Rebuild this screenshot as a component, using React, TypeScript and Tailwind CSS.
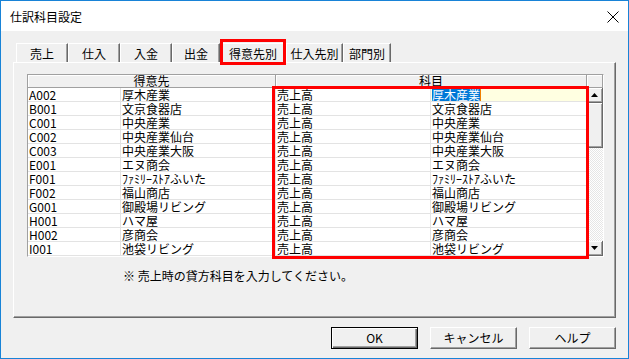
import React from "react";

const rows: [string, string][] = [
  ["A002", "厚木産業"],
  ["B001", "文京食器店"],
  ["C001", "中央産業"],
  ["C002", "中央産業仙台"],
  ["C003", "中央産業大阪"],
  ["E001", "エヌ商会"],
  ["F001", "ﾌｧﾐﾘｰｽﾄｱふいた"],
  ["F002", "福山商店"],
  ["G001", "御殿場リビング"],
  ["H001", "ハマ屋"],
  ["H002", "彦商会"],
  ["I001", "池袋リビング"],
];

const tabs: { label: string; w: string }[] = [
  { label: "売上", w: "w-[52px]" },
  { label: "仕入", w: "w-[52px]" },
  { label: "入金", w: "w-[52px]" },
  { label: "出金", w: "w-[48px]" },
  { label: "得意先別", w: "w-[66px]" },
  { label: "仕入先別", w: "w-[57px]" },
  { label: "部門別", w: "w-[48px]" },
];

function Tri({ up }: { up: boolean }) {
  return (
    <svg width="7" height="4" viewBox="0 0 7 4">
      {up ? <polygon points="0,4 7,4 3.5,0" fill="#000" /> : <polygon points="0,0 7,0 3.5,4" fill="#000" />}
    </svg>
  );
}

export default function App() {
  return (
    <div className="w-[629px] h-[359px] border border-[#1883d7] bg-[#f0f0f0] flex flex-col font-['Noto_Sans_CJK_JP','Noto_Sans_CJK_JP',sans-serif] text-[12px] leading-[14px] text-black overflow-hidden">
      {/* Title bar */}
      <div className="h-[30px] bg-white flex items-center justify-between pl-[9px] pr-[9px] shrink-0">
        <span className="text-[12px] mt-[2px]">仕訳科目設定</span>
        <svg width="12" height="12" viewBox="0 0 12 12" className="mt-[1px]">
          <line x1="0.5" y1="0.5" x2="11.5" y2="11.5" stroke="#000" strokeWidth="1" />
          <line x1="11.5" y1="0.5" x2="0.5" y2="11.5" stroke="#000" strokeWidth="1" />
        </svg>
      </div>

      <div className="flex flex-col px-[12px] pt-[12px]">
        {/* Tabs */}
        <div className="relative flex h-[19px] pl-[3px] z-10">
          {tabs.map((t) => (
            <div
              key={t.label}
              className={`${t.w} h-[19px] flex items-center justify-center border-t border-l border-t-white border-l-white border-r border-r-[#696969] shadow-[inset_-1px_0_0_#a0a0a0] pt-[1px] leading-[14px]`}
            >
              {t.label}
            </div>
          ))}
          <div className="absolute left-[207px] top-[-4px] w-[66px] h-[26px] border-[3px] border-[#ff0000]" />
        </div>

        {/* Panel */}
        <div className="h-[256px] border border-t-white border-l-white border-r-[#696969] border-b-[#696969] shadow-[inset_-1px_-1px_0_#a0a0a0] flex flex-col pl-[13px] pt-[11px]">
          {/* Grid */}
          <div className="relative w-[577px] border border-t-[#a0a0a0] border-l-[#a0a0a0] border-r-white border-b-white flex bg-white">
            <div className="w-[559px] flex flex-col">
              <div className="flex h-[13px]">
                <div className="w-[248px] h-[13px] bg-[#f0f0f0] border-r border-b border-[#a0a0a0] shadow-[inset_1px_1px_0_#fff] flex items-center justify-center leading-[12px]">
                  得意先
                </div>
                <div className="w-[311px] h-[13px] bg-[#f0f0f0] border-r border-b border-[#a0a0a0] shadow-[inset_1px_1px_0_#fff] flex items-center justify-center leading-[12px]">
                  科目
                </div>
              </div>
              {rows.map(([code, name], i) => (
                <div key={code} className="flex h-[14px] border-b border-[#e3e3e3] leading-[13px]">
                  <div className="w-[93px] border-r border-[#e3e3e3] pl-[1px] flex items-center whitespace-nowrap">
                    {code}
                  </div>
                  <div className="w-[155px] border-r border-[#e3e3e3] pl-[1px] flex items-center whitespace-nowrap">
                    {name}
                  </div>
                  <div className="w-[155px] border-r border-[#e3e3e3] pl-[1px] flex items-center whitespace-nowrap">
                    売上高
                  </div>
                  <div
                    className={`w-[156px] pl-[1px] flex items-center whitespace-nowrap ${
                      i === 0 ? "bg-[#ffffe1]" : ""
                    }`}
                  >
                    {i === 0 ? (
                      <>
                        <span className="bg-[#0078d7] text-white">{name}</span>
                        <span className="w-[1px] h-[13px] bg-[#f08000]" />
                      </>
                    ) : (
                      name
                    )}
                  </div>
                </div>
              ))}
            </div>
            {/* Scrollbar */}
            <div className="w-[16px] flex flex-col bg-[#f0f0f0]">
              <div className="h-[13px] border-r border-b border-[#a0a0a0] shadow-[inset_1px_1px_0_#fff]" />
              <div className="h-[15px] border-r border-b border-[#696969] shadow-[inset_1px_1px_0_#fff,inset_-1px_-1px_0_#a0a0a0] flex items-center justify-center">
                <Tri up={true} />
              </div>
              <div className="h-[45px] border-r border-b border-[#696969] shadow-[inset_1px_1px_0_#fff,inset_-1px_-1px_0_#a0a0a0]" />
              <div className="flex-1 bg-[repeating-conic-gradient(#e6e6e6_0_25%,#ffffff_0_50%)] bg-[length:2px_2px]" />
              <div className="h-[15px] border-r border-b border-[#696969] shadow-[inset_1px_1px_0_#fff,inset_-1px_-1px_0_#a0a0a0] flex items-center justify-center">
                <Tri up={false} />
              </div>
            </div>
            {/* Red annotation */}
            <div className="absolute left-[244px] top-[11px] w-[317px] h-[173px] border-[3px] border-[#ff0000] pointer-events-none" />
          </div>

          <div className="mt-[12px] ml-[96px]">※ 売上時の貸方科目を入力してください。</div>
        </div>

        {/* Buttons */}
        <div className="flex justify-end gap-[12px] mt-[9px]">
          <button className="w-[87px] h-[22px] bg-[#f0f0f0] border border-black shadow-[inset_1px_1px_0_#fff,inset_-1px_-1px_0_#696969,inset_-2px_-2px_0_#a0a0a0] flex items-center justify-center">
            OK
          </button>
          <button className="w-[87px] h-[22px] bg-[#f0f0f0] border border-t-white border-l-white border-r-[#696969] border-b-[#696969] shadow-[inset_-1px_-1px_0_#a0a0a0] flex items-center justify-center">
            キャンセル
          </button>
          <button className="w-[87px] h-[22px] bg-[#f0f0f0] border border-t-white border-l-white border-r-[#696969] border-b-[#696969] shadow-[inset_-1px_-1px_0_#a0a0a0] flex items-center justify-center">
            ヘルプ
          </button>
        </div>
      </div>
    </div>
  );
}
